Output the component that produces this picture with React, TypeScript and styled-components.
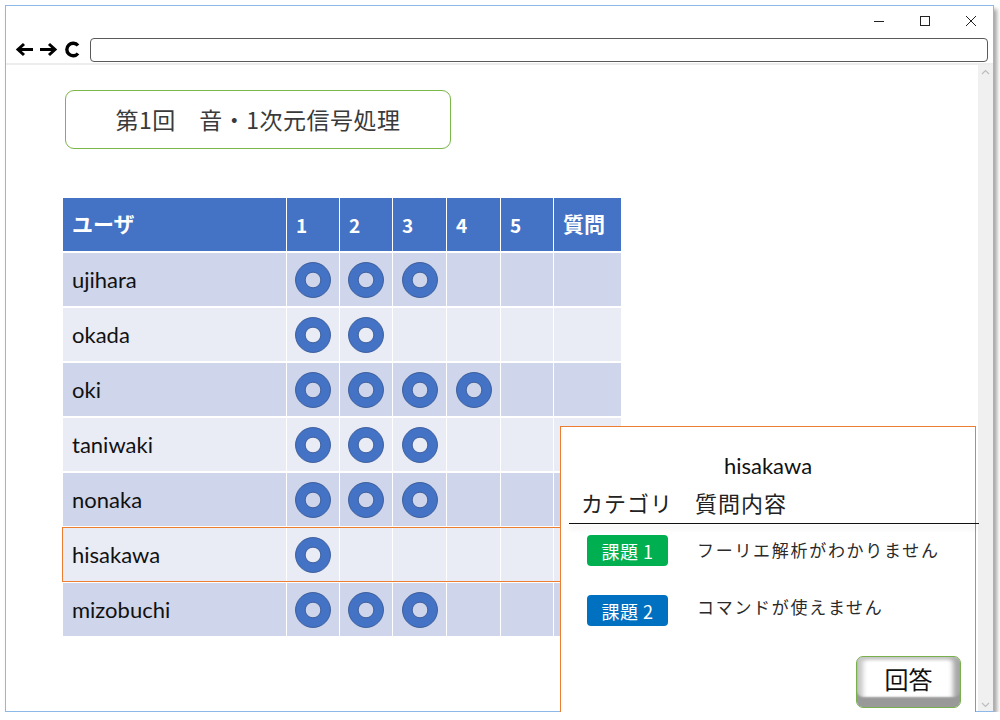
import styled, { createGlobalStyle } from "styled-components";

const GlobalStyle = createGlobalStyle`
  body {
    margin: 0;
    background: #ffffff;
    font-family: "Noto Sans CJK JP", "Noto Sans", sans-serif;
  }
`;

const Frame = styled.div`
  margin: 5px 0 0 5px;
  width: 989px;
  height: 707px;
  box-sizing: border-box;
  border: 1px solid #8db9e9;
  background: #ffffff;
  box-shadow: 3px 4px 4px rgba(0, 0, 0, 0.35);
  display: flex;
  flex-direction: column;
`;

const TitleBar = styled.div`
  height: 30px;
  display: flex;
  justify-content: flex-end;
  align-items: center;
  padding-right: 12px;
  gap: 26px;
`;

const WinButton = styled.span`
  width: 20px;
  height: 20px;
  display: flex;
  align-items: center;
  justify-content: center;
`;

const NavBar = styled.div`
  height: 27px;
  display: flex;
  align-items: flex-start;
  padding: 2px 5px 0 6px;
  box-sizing: border-box;
`;

const NavIcon = styled.span`
  width: 24px;
  height: 23px;
  display: flex;
  align-items: center;
  justify-content: center;
`;

const AddressBar = styled.div`
  flex: 1;
  height: 24px;
  margin-left: 6px;
  box-sizing: border-box;
  border: 1px solid #5a5a5a;
  border-radius: 4px;
`;

const Divider = styled.div`
  height: 2px;
  background: #ededed;
`;

const Body = styled.div`
  flex: 1;
  display: flex;
  min-height: 0;
`;

const Content = styled.div`
  position: relative;
  width: 972px;
  padding: 25px 0 0 57px;
  box-sizing: border-box;
`;

const Scrollbar = styled.div`
  width: 15px;
  background: #f0f0f0;
  display: flex;
  flex-direction: column;
  justify-content: space-between;
  align-items: center;
  padding: 4px 0 3px;
  box-sizing: border-box;
`;

const TitleBox = styled.div`
  margin-left: 2px;
  width: 386px;
  height: 59px;
  box-sizing: border-box;
  border: 1px solid #7ab648;
  border-radius: 9px;
  display: flex;
  align-items: center;
  justify-content: center;
  font-size: 23px;
  color: #3a3a3a;
  letter-spacing: 0.5px;
  padding-bottom: 1px;
`;

const Table = styled.div`
  margin-top: 49px;
  display: flex;
  flex-direction: column;
  gap: 2px;
  width: 558px;
`;

const Row = styled.div<{ $tone: "head" | "dark" | "light"; $selected?: boolean }>`
  display: grid;
  grid-template-columns: 223px 52px 52px 53px 53px 52px 67px;
  column-gap: 1px;
  height: 53px;
  background: #ffffff;
  outline: ${(p) => (p.$selected ? "1px solid #ed7d31" : "none")};
  & > div {
    background: ${(p) =>
      p.$tone === "head" ? "#4472c4" : p.$tone === "dark" ? "#cfd5ea" : "#e9ebf5"};
  }
`;

const HeadCell = styled.div`
  display: flex;
  align-items: center;
  padding-left: 9px;
  color: #ffffff;
  font-weight: 700;
  font-size: 21px;
  padding-bottom: 4px;
`;

const NumCell = styled(HeadCell)`
  font-size: 19px;
  padding-bottom: 0;
`;

const NameCell = styled.div`
  display: flex;
  align-items: center;
  padding-left: 9px;
  font-family: "Lato", "Noto Sans CJK JP", sans-serif;
  font-size: 22px;
  color: #111111;
`;

const MarkCell = styled.div`
  display: flex;
  align-items: center;
  justify-content: center;
`;

const Popup = styled.div`
  position: absolute;
  left: 554px;
  top: 361px;
  width: 416px;
  height: 287px;
  box-sizing: border-box;
  border: 1px solid #ed7d31;
  background: #ffffff;
  display: flex;
  flex-direction: column;
`;

const PopupName = styled.div`
  margin-top: 26px;
  text-align: center;
  font-family: "Lato", "Noto Sans CJK JP", sans-serif;
  font-size: 22px;
  color: #111111;
  line-height: 26px;
`;

const PopupHead = styled.div`
  display: flex;
  margin-top: 8px;
  padding-left: 20px;
  font-size: 22px;
  color: #222222;
  letter-spacing: 1px;
  line-height: 30px;
  gap: 22px;
`;

const HeadRule = styled.div`
  margin: 6px -4px 0 8px;
  height: 1px;
  background: #111111;
  box-shadow: 0 4px 5px rgba(0, 0, 0, 0.18);
`;

const QuestionList = styled.div`
  display: flex;
  flex-direction: column;
  gap: 29px;
  margin-top: 11px;
  padding-left: 26px;
`;

const Question = styled.div`
  display: flex;
  align-items: center;
  gap: 29px;
`;

const Badge = styled.span<{ $color: string }>`
  width: 81px;
  height: 31px;
  border-radius: 4px;
  background: ${(p) => p.$color};
  color: #ffffff;
  font-size: 18px;
  display: flex;
  align-items: center;
  justify-content: center;
  letter-spacing: 0.5px;
`;

const QuestionText = styled.span<{ $lift: number }>`
  font-size: 17px;
  color: #2a2a2a;
  letter-spacing: 1.7px;
  margin-top: ${(p) => -p.$lift}px;
`;

const Footer = styled.div`
  margin-top: auto;
  display: flex;
  justify-content: flex-end;
  padding: 0 14px 4px 0;
`;

const AnswerButton = styled.button`
  width: 105px;
  height: 52px;
  box-sizing: border-box;
  border: 1.5px solid #78b04e;
  border-radius: 7px;
  background: #ffffff;
  box-shadow: inset 0 -10px 2px #999999, inset 6px 0 5px #c8c8c8,
    inset -7px 0 5px #a8a8a8, inset 0 3px 3px #e0e0e0;
  font-family: "Noto Sans CJK JP", sans-serif;
  font-size: 24px;
  color: #111111;
  padding: 0 0 8px;
`;

const Ring = () => (
  <svg width="38" height="38" viewBox="0 0 38 38">
    <path
      d="M1.5 19a17.5 17.5 0 1 0 35 0a17.5 17.5 0 1 0 -35 0Z M11.2 19a7.8 7.8 0 1 0 15.6 0a7.8 7.8 0 1 0 -15.6 0Z"
      fill="#4472c4"
      fillRule="evenodd"
      stroke="#2f528f"
      strokeWidth="0.8"
    />
  </svg>
);

const users: { name: string; done: number }[] = [
  { name: "ujihara", done: 3 },
  { name: "okada", done: 2 },
  { name: "oki", done: 4 },
  { name: "taniwaki", done: 3 },
  { name: "nonaka", done: 3 },
  { name: "hisakawa", done: 1 },
  { name: "mizobuchi", done: 3 },
];

const questions = [
  { tag: "課題 1", color: "#00b050", text: "フーリエ解析がわかりません", lift: 3 },
  { tag: "課題 2", color: "#0070c0", text: "コマンドが使えません", lift: 8 },
];

export default function App() {
  return (
    <>
      <GlobalStyle />
      <Frame>
        <TitleBar>
          <WinButton>
            <svg width="12" height="12" viewBox="0 0 12 12">
              <path d="M1 6.5h10" stroke="#222" strokeWidth="1" />
            </svg>
          </WinButton>
          <WinButton>
            <svg width="12" height="12" viewBox="0 0 12 12">
              <rect x="1.5" y="1.5" width="9" height="9" fill="none" stroke="#222" strokeWidth="1" />
            </svg>
          </WinButton>
          <WinButton>
            <svg width="12" height="12" viewBox="0 0 12 12">
              <path d="M1 1l10 10M11 1L1 11" stroke="#222" strokeWidth="1" />
            </svg>
          </WinButton>
        </TitleBar>
        <NavBar>
          <NavIcon>
            <svg width="19" height="15" viewBox="0 0 19 15">
              <path d="M18 7.5H3.5M9 2L3 7.5L9 13" fill="none" stroke="#000" strokeWidth="3" />
            </svg>
          </NavIcon>
          <NavIcon>
            <svg width="19" height="15" viewBox="0 0 19 15">
              <path d="M1 7.5h14.5M10 2l6 5.5L10 13" fill="none" stroke="#000" strokeWidth="3" />
            </svg>
          </NavIcon>
          <NavIcon>
            <svg width="17" height="17" viewBox="0 0 17 17">
              <path d="M14 4.5A6.3 6.3 0 1 0 14 12.5" fill="none" stroke="#000" strokeWidth="3.4" />
            </svg>
          </NavIcon>
          <AddressBar />
        </NavBar>
        <Divider />
        <Body>
          <Content>
            <TitleBox>第1回　音・1次元信号処理</TitleBox>
            <Table>
              <Row $tone="head">
                <HeadCell>ユーザ</HeadCell>
                {[1, 2, 3, 4, 5].map((n) => (
                  <NumCell key={n}>{n}</NumCell>
                ))}
                <HeadCell>質問</HeadCell>
              </Row>
              {users.map((u, i) => (
                <Row
                  key={u.name}
                  $tone={i % 2 === 0 ? "dark" : "light"}
                  $selected={u.name === "hisakawa"}
                >
                  <NameCell>{u.name}</NameCell>
                  {[0, 1, 2, 3, 4].map((k) => (
                    <MarkCell key={k}>{k < u.done && <Ring />}</MarkCell>
                  ))}
                  <MarkCell />
                </Row>
              ))}
            </Table>
            <Popup>
              <PopupName>hisakawa</PopupName>
              <PopupHead>
                <span>カテゴリ</span>
                <span>質問内容</span>
              </PopupHead>
              <HeadRule />
              <QuestionList>
                {questions.map((q) => (
                  <Question key={q.tag}>
                    <Badge $color={q.color}>{q.tag}</Badge>
                    <QuestionText $lift={q.lift}>{q.text}</QuestionText>
                  </Question>
                ))}
              </QuestionList>
              <Footer>
                <AnswerButton>回答</AnswerButton>
              </Footer>
            </Popup>
          </Content>
          <Scrollbar>
            <svg width="9" height="6" viewBox="0 0 9 6">
              <path d="M1 5l3.5-3.5L8 5" fill="none" stroke="#bdbdbd" strokeWidth="1.2" />
            </svg>
            <svg width="9" height="6" viewBox="0 0 9 6">
              <path d="M1 1l3.5 3.5L8 1" fill="none" stroke="#bdbdbd" strokeWidth="1.2" />
            </svg>
          </Scrollbar>
        </Body>
      </Frame>
    </>
  );
}
